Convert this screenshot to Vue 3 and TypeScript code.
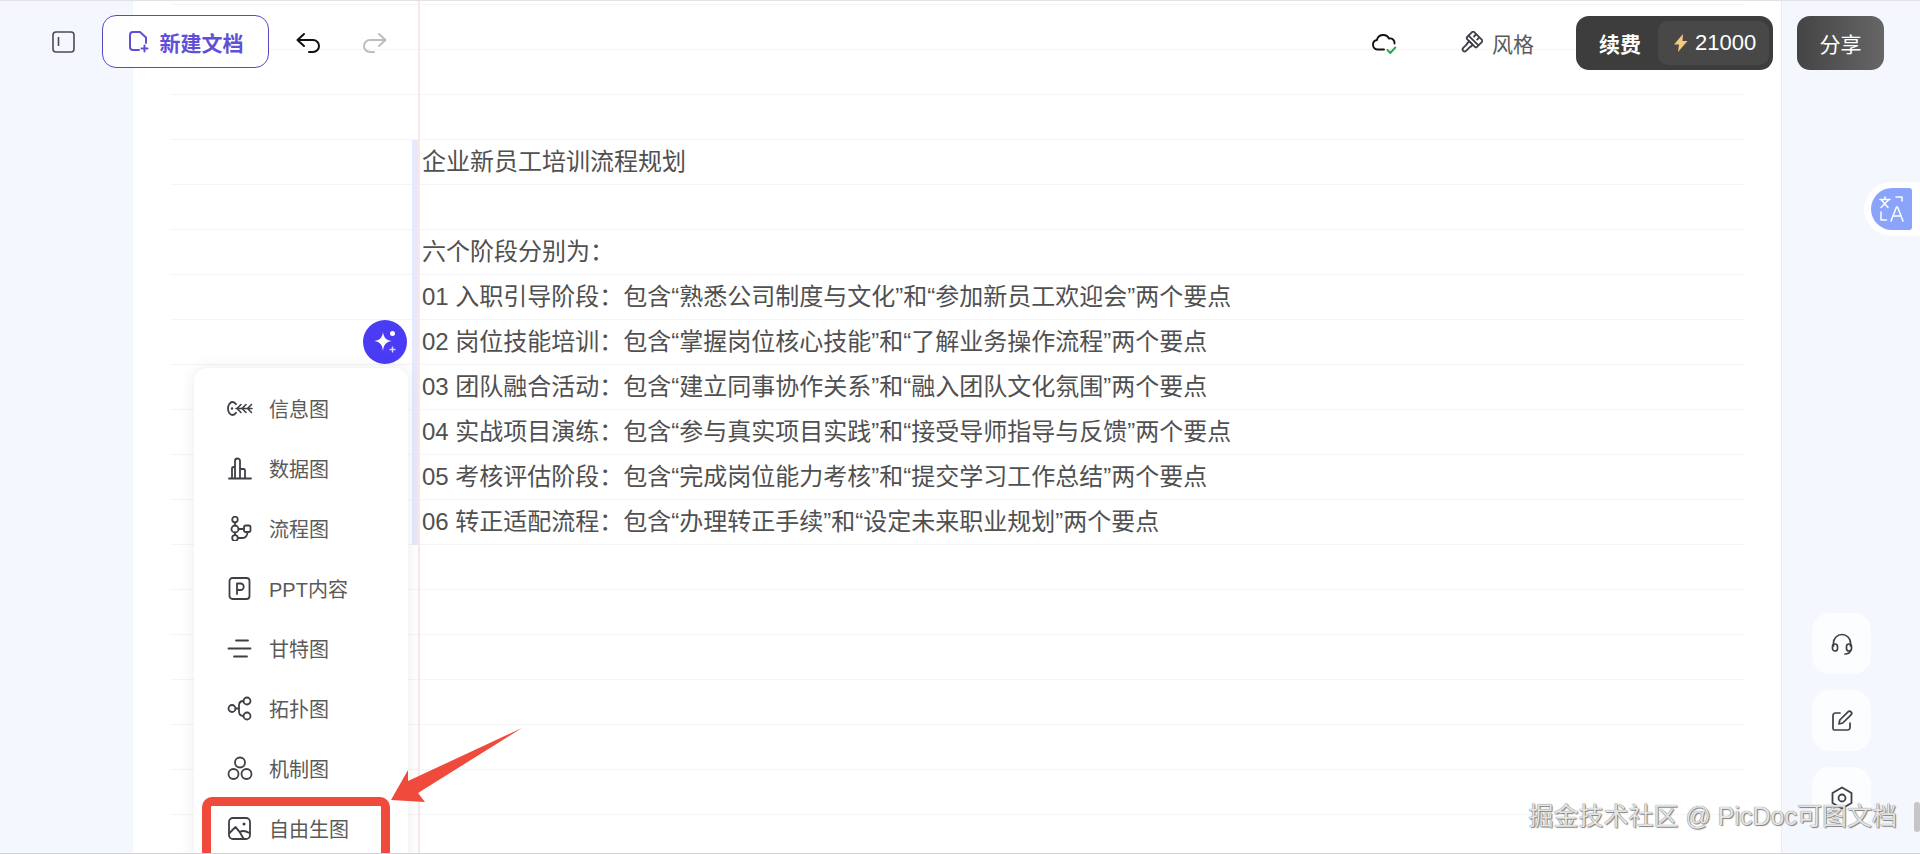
<script setup lang="ts">
interface Row {
  text: string;
  marked: boolean;
}

const lines = [
  '',
  '',
  '',
  '企业新员工培训流程规划',
  '',
  '六个阶段分别为：',
  '01 入职引导阶段：包含“熟悉公司制度与文化”和“参加新员工欢迎会”两个要点',
  '02 岗位技能培训：包含“掌握岗位核心技能”和“了解业务操作流程”两个要点',
  '03 团队融合活动：包含“建立同事协作关系”和“融入团队文化氛围”两个要点',
  '04 实战项目演练：包含“参与真实项目实践”和“接受导师指导与反馈”两个要点',
  '05 考核评估阶段：包含“完成岗位能力考核”和“提交学习工作总结”两个要点',
  '06 转正适配流程：包含“办理转正手续”和“设定未来职业规划”两个要点',
  '', '', '', '', '', '', ''
];

const rows: Row[] = lines.map((text, i) => ({ text, marked: i >= 3 && i <= 11 }));

const menu = ['信息图', '数据图', '流程图', 'PPT内容', '甘特图', '拓扑图', '机制图', '自由生图'];
</script>

<template>
  <div class="page">
    <main class="paper">
      <div class="sheet">
        <div v-for="(row, i) in rows" :key="i" class="row">
          <div class="cell" :class="{ marked: row.marked }">{{ row.text }}</div>
        </div>
      </div>
    </main>

    <aside class="side">
      <button class="tool">
        <svg width="24" height="24" viewBox="0 0 24 24" fill="none" stroke="#3f3f46" stroke-width="1.7" stroke-linecap="round">
          <path d="M3.500 14V11a8.500 8.500 0 0 1 17 0v3" />
          <rect x="2.500" y="12" width="5" height="7" rx="2.500" />
          <rect x="16.500" y="12" width="5" height="7" rx="2.500" />
          <path d="M20.500 19c-.8 2-3 3-5.500 3" />
        </svg>
      </button>
      <button class="tool">
        <svg width="24" height="24" viewBox="0 0 24 24" fill="none" stroke="#3f3f46" stroke-width="1.7" stroke-linecap="round" stroke-linejoin="round">
          <path d="M10 4H5.500A2.500 2.500 0 0 0 3 6.500v13A1.500 1.500 0 0 0 4.500 21h13a2.500 2.500 0 0 0 2.500-2.500V14" />
          <path d="M9 15l.8-4L18 2.800a2 2 0 0 1 3 3L12.800 14z" />
        </svg>
      </button>
      <button class="tool">
        <svg width="24" height="24" viewBox="0 0 24 24" fill="none" stroke="#3f3f46" stroke-width="1.8" stroke-linejoin="round">
          <path d="M12 1.500l9.500 5.500v10L12 22.500 2.500 17V7z" />
          <circle cx="12" cy="12" r="3.500" />
        </svg>
      </button>
    </aside>

    <div class="rule"></div>

    <header class="bar">
      <div class="bar-left">
        <svg class="panel-icon" width="23" height="22" viewBox="0 0 23 22" fill="none" stroke="#4b4b50" stroke-width="1.6">
          <rect x="1" y="1" width="21" height="20" rx="3" />
          <path d="M6.500 6v9" />
        </svg>
        <button class="new-doc">
          <svg width="22" height="23" viewBox="0 0 22 23" fill="none" stroke="#6050d8" stroke-width="2" stroke-linecap="round" stroke-linejoin="round">
            <path d="M11 20H5a3 3 0 0 1-3-3V5a3 3 0 0 1 3-3h7l6 5.500V13" />
            <path d="M16.500 15.500v6M13.500 18.500h6" />
          </svg>
          <span>新建文档</span>
        </button>
        <svg class="undo" width="25" height="21" viewBox="0 0 25 21" fill="none" stroke="#111" stroke-width="2" stroke-linecap="round" stroke-linejoin="round">
          <path d="M8 2L1.500 8 8 14M2 8h15a6 6 0 0 1 0 12h-4" />
        </svg>
        <svg class="redo" width="25" height="21" viewBox="0 0 25 21" fill="none" stroke="#bdbdbd" stroke-width="2" stroke-linecap="round" stroke-linejoin="round">
          <path d="M17 2l6.500 6L17 14M23 8H8a6 6 0 0 0 0 12h4" />
        </svg>
      </div>
      <div class="bar-right">
        <svg class="cloud" width="26" height="24" viewBox="0 0 26 24" fill="none">
          <path d="M13 18.500H6.500a4.800 4.800 0 0 1-.6-9.500A6.500 6.500 0 0 1 18 7.500a4.500 4.500 0 0 1 5.500 5" stroke="#111" stroke-width="1.900" stroke-linecap="round" />
          <path d="M16.500 19l2.800 3 5-5.500" stroke="#22ad5c" stroke-width="2" stroke-linecap="round" stroke-linejoin="round" />
        </svg>
        <svg class="brush" width="24" height="24" viewBox="0 0 24 24" fill="none" stroke="#3f3f46" stroke-width="1.800" stroke-linejoin="round">
          <g transform="rotate(45 12 12)">
            <rect x="5" y="2" width="14" height="10" rx="1.500" />
            <path d="M9.500 2v4M14 2v4M5 8.500h14" />
            <path d="M9.500 12h5v3h-.5v6a2 2 0 0 1-4 0v-6h-.5z" />
          </g>
        </svg>
        <span class="style-label">风格</span>
        <div class="renew">
          <strong>续费</strong>
          <span class="credit">
            <svg width="14" height="18" viewBox="0 0 14 18"><path d="M9 0L0 10.500h5L4 18l9.500-11H8.500z" fill="#f6c77d" /></svg>
            21000
          </span>
        </div>
        <button class="share">分享</button>
      </div>
    </header>

    <div class="translate">
      <div class="translate-badge">
        <svg width="26" height="28" viewBox="0 0 26 28" fill="none" stroke="#fff" stroke-width="1.500" stroke-linecap="round" stroke-linejoin="round">
          <path d="M1 4.500h10M6 2v2.500M2.500 5l6.500 7.500M9.500 5L2 12.500" />
          <path d="M17 2h6v4M2 17v8h5.500" />
          <path d="M12 26l5.500-14h1L24 26M14 21h8" />
        </svg>
      </div>
    </div>

    <button class="spark">
      <svg width="28" height="28" viewBox="0 0 28 28">
        <path d="M12 4c.7 5.500 3 8 8.500 9-5.500 1-7.800 3.500-8.500 10-.7-6.500-3-9-8.500-10C9 12 11.300 9.500 12 4z" fill="#fff" />
        <circle cx="21.500" cy="5.500" r="2.500" fill="#fff" />
        <path d="M21.500 18.500v6M18.500 21.500h6" stroke="#d8d6ff" stroke-width="1.400" />
      </svg>
    </button>

    <nav class="menu">
      <div v-for="(name, i) in menu" :key="name" class="menu-item">
        <svg class="menu-icon" width="26" height="25" viewBox="0 0 26 25" fill="none" stroke="#3f3f46" stroke-width="1.800" stroke-linecap="round" stroke-linejoin="round">
          <template v-if="i === 0">
            <path d="M5.500 6a4.500 6.500 0 0 0 0 13c1.500 0 2.700-.8 3.500-2.200M9 8.200C8.200 6.800 7 6 5.500 6" />
            <circle cx="5" cy="12.500" r="1.200" fill="#3f3f46" stroke="none" />
            <path d="M9 12.500h16M14 8.500l-4 4 4 4M19 8.500l-4 4 4 4M24.500 8.500l-4 4 4 4" stroke-width="1.600" />
          </template>
          <template v-else-if="i === 1">
            <path d="M2 22.500h22M5 22v-9.500a1.500 1.500 0 0 1 3 0V22M8 22V5a2.500 2.500 0 0 1 5 0v17M13 22v-9h3.500a1.500 1.500 0 0 1 1.500 1.500V22" />
          </template>
          <template v-else-if="i === 2">
            <circle cx="8" cy="3.500" r="2.800" />
            <circle cx="8" cy="13" r="3.500" />
            <rect x="17" y="9.500" width="6.500" height="6.500" rx="1.800" />
            <circle cx="8" cy="22" r="2.800" />
            <path d="M8 6.300v3.200M11.500 13H17M8 16.500v2.700M10.800 22h4.700a5 5 0 0 0 4.800-6" />
          </template>
          <template v-else-if="i === 3">
            <rect x="2.500" y="2" width="20" height="21" rx="3" />
            <path d="M10 18V7.500h3.500a3 3 0 0 1 0 6.500H10" />
          </template>
          <template v-else-if="i === 4">
            <path d="M9 4.500h12M1.500 12.500h22M7 20.500h13" />
          </template>
          <template v-else-if="i === 5">
            <circle cx="5" cy="12.500" r="3.500" />
            <circle cx="20" cy="5" r="3.500" />
            <circle cx="20" cy="20" r="3.500" />
            <path d="M8.500 12.500h3M16.500 5c-3 0-4.500 2-4.500 4.500v6c0 2.500 1.500 4.500 4.500 4.500" />
          </template>
          <template v-else-if="i === 6">
            <circle cx="13" cy="6.500" r="5" />
            <circle cx="6.500" cy="18" r="5" />
            <circle cx="19.500" cy="18" r="5" />
          </template>
          <template v-else>
            <rect x="2" y="2" width="21" height="21" rx="4" />
            <circle cx="17" cy="8" r="1.500" fill="#3f3f46" stroke="none" />
            <path d="M2.500 17l6-6c3 3 5.500 6.500 8 11.500M13 16c2-1.500 5-1.500 9.500 1" />
          </template>
        </svg>
        <span>{{ name }}</span>
      </div>
    </nav>

    <div class="highlight"></div>
    <svg class="arrow" width="140" height="80" viewBox="0 0 140 80">
      <path d="M1 72L18 42 18 53 132 0 28 65 35 74z" fill="#ef4a3c" />
    </svg>

    <div class="watermark">掘金技术社区 @ PicDoc可图文档</div>
    <div class="scroll-thumb"></div>
  </div>
</template>

<style scoped>
.page {
  position: relative;
  display: flex;
  width: 1920px;
  height: 854px;
  overflow: hidden;
  background: #f5f7fe;
  border-top: 1px solid #e2e2e4;
  border-bottom: 1px solid #d4d4d8;
  box-sizing: border-box;
  font-family: "Liberation Sans", "Noto Sans CJK SC", sans-serif;
  color: #505050;
}
button {
  border: 0;
  padding: 0;
  font-family: inherit;
}
.paper {
  flex: none;
  width: 1648px;
  margin-left: 133px;
  background: #fff;
  box-shadow: 1px 0 0 #e8ecf6, -1px 0 0 #f2f4fb;
}
.sheet {
  width: 1575px;
  margin: 3px 0 0 37px;
  border-top: 1px solid #f5f5f7;
}
.row {
  box-sizing: border-box;
  height: 45px;
  border-bottom: 1px solid #f5f5f7;
}
.cell {
  box-sizing: border-box;
  height: 45px;
  margin-left: 252px;
  font-size: 24px;
  line-height: 44px;
  white-space: nowrap;
}
.cell.marked {
  margin-left: 242px;
  padding-left: 4px;
  border-left: 6px solid #e6e9fd;
}
.side {
  flex: none;
  display: flex;
  flex-direction: column;
  gap: 16px;
  width: 59px;
  padding: 612px 0 0 31px;
}
.tool {
  display: flex;
  align-items: center;
  justify-content: center;
  flex: none;
  width: 59px;
  height: 61px;
  border-radius: 18px;
  background: #fcfdff;
}
.rule {
  position: absolute;
  top: 0;
  bottom: 0;
  left: 418px;
  width: 2px;
  background: #fde6e7;
}
.bar {
  position: absolute;
  top: -1px;
  left: 0;
  right: 0;
  display: flex;
  align-items: center;
  justify-content: space-between;
  height: 86px;
}
.bar-left {
  display: flex;
  align-items: center;
  margin: -3px 0 0 52px;
}
.new-doc {
  display: flex;
  align-items: center;
  justify-content: center;
  gap: 10px;
  width: 167px;
  height: 53px;
  margin-left: 27px;
  border: 1px solid #5b48c8;
  border-radius: 14px;
  background: rgba(255, 255, 255, 0.85);
  color: #6050d8;
  font-size: 21px;
  font-weight: 700;
  box-sizing: border-box;
}
.undo {
  margin: 2px 0 0 27px;
}
.redo {
  margin: 2px 0 0 41px;
}
.bar-right {
  display: flex;
  align-items: center;
  padding-right: 36px;
}
.brush {
  margin-left: 62px;
}
.style-label {
  margin-left: 9px;
  font-size: 21px;
  color: #5a5a5a;
}
.renew {
  display: flex;
  align-items: center;
  justify-content: space-between;
  box-sizing: border-box;
  width: 197px;
  height: 54px;
  margin-left: 42px;
  padding: 0 4px 0 23px;
  border-radius: 13px;
  background: #3d3d3d;
  color: #fff;
  font-size: 21px;
}
.credit {
  display: flex;
  align-items: center;
  gap: 7px;
  box-sizing: border-box;
  width: 111px;
  height: 44px;
  padding-left: 16px;
  border-radius: 10px;
  background: #484848;
  font-size: 22px;
}
.share {
  width: 87px;
  height: 54px;
  margin-left: 24px;
  border-radius: 13px;
  background: linear-gradient(90deg, #444, #666);
  color: #fff;
  font-size: 21px;
}
.translate {
  position: absolute;
  top: 181px;
  right: -30px;
  display: flex;
  align-items: center;
  box-sizing: border-box;
  width: 86px;
  height: 54px;
  padding-left: 7px;
  border-radius: 27px;
  background: rgba(255, 255, 255, 0.85);
}
.translate-badge {
  display: flex;
  align-items: center;
  justify-content: center;
  width: 41px;
  height: 42px;
  border-radius: 21px 3px 3px 21px;
  background: #8aa4fb;
}
.spark {
  position: absolute;
  top: 319px;
  left: 363px;
  display: flex;
  align-items: center;
  justify-content: center;
  width: 44px;
  height: 44px;
  border-radius: 50%;
  background: #4a3cf5;
}
.menu {
  position: absolute;
  top: 367px;
  left: 194px;
  box-sizing: border-box;
  width: 214px;
  height: 520px;
  padding-top: 10px;
  border-radius: 14px;
  background: #fff;
  box-shadow: 0 0 16px rgba(0, 0, 0, 0.08);
}
.menu-item {
  display: flex;
  align-items: center;
  gap: 16px;
  height: 60px;
  padding-left: 33px;
  font-size: 20px;
  color: #5a5a5a;
}
.menu-icon {
  flex: none;
}
.highlight {
  position: absolute;
  top: 796px;
  left: 202px;
  box-sizing: border-box;
  width: 188px;
  height: 70px;
  border: 9px solid #ef4a3c;
  border-radius: 10px;
}
.arrow {
  position: absolute;
  top: 727px;
  left: 390px;
}
.watermark {
  position: absolute;
  top: 798px;
  right: 23px;
  font-size: 25px;
  line-height: 34px;
  white-space: nowrap;
  color: #e4e4e4;
  text-shadow: 0 0 1px #555, 1px 1px 1px #888;
}
.scroll-thumb {
  position: absolute;
  top: 801px;
  right: 0;
  width: 6px;
  height: 30px;
  border-radius: 3px;
  background: #c6c6c6;
}
</style>
